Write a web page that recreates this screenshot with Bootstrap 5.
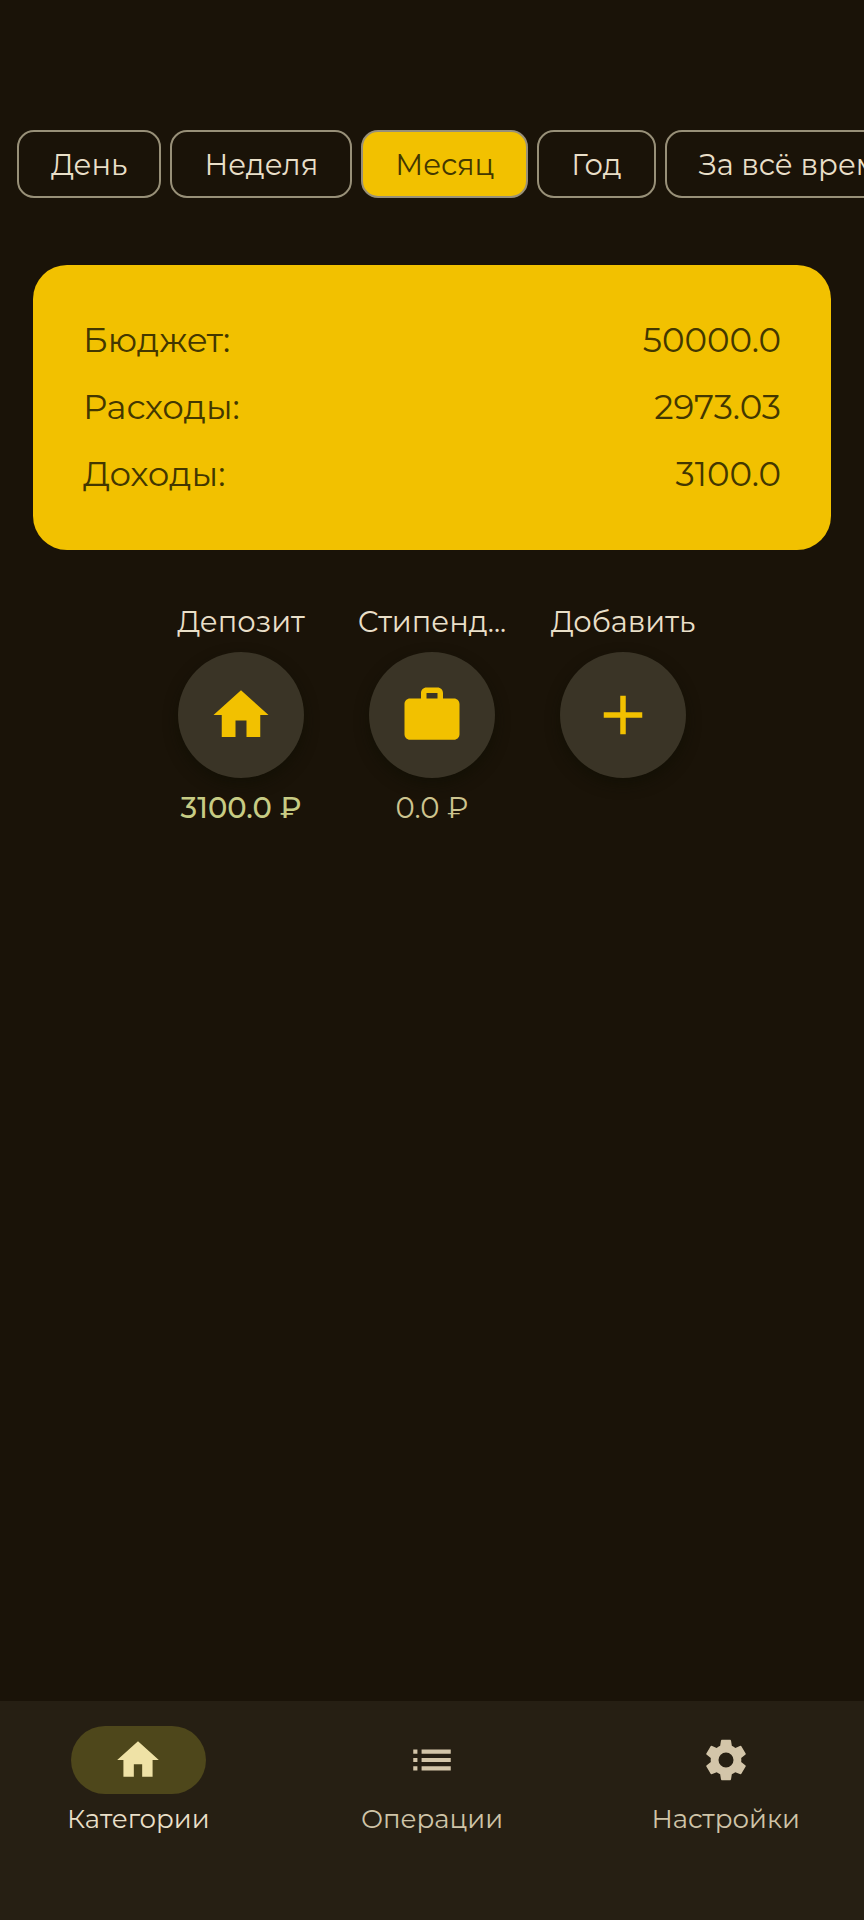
<!DOCTYPE html>
<html lang="ru" data-bs-theme="dark">
<head>
<meta charset="utf-8">
<meta name="viewport" content="width=device-width, initial-scale=1">
<title>Категории</title>
<link href="https://cdn.jsdelivr.net/npm/bootstrap@5.3.0/dist/css/bootstrap.min.css" rel="stylesheet">
<style>
  body { background: #1a1308; color: #e9dfc8; font-family: "Montserrat", "Inter", sans-serif; font-size: 29px; line-height: 42px; }
  .periods { padding: 130px 17px 0; gap: 9px; }
  .chip { height: 68px; padding: 2px 32px 0; border: 2px solid #989078; border-radius: 17px; color: #e9dfc8; font-size: 29px; line-height: 42px; white-space: nowrap; flex: none; }
  .chip.active, .chip:hover { background: #f2c100; border-color: #989078; color: #433700; }
  .summary { margin: 67px 33px 0; padding: 42px 50px; border-radius: 34px; background: #f2c100; color: #433700; font-size: 34px; line-height: 67px; }
  .category-list { margin-top: 51px; gap: 31px; }
  .category { width: 160px; }
  .round-btn { width: 126px; height: 126px; margin: 9px 0; border: 0; background: #3a3426; color: #f2c100; box-shadow: 0 6px 14px #0f0f0399; }
  .round-btn svg { width: 66px; height: 66px; }
  .income { color: #c7cc84; font-weight: 500; }
  .empty-sum { color: #cdc48f; }
  .bottom-bar { background: #261f13; height: 219px; padding-top: 25px; gap: 17px; }
  .tab { flex: 1 1 0; color: #cfc4a8; font-size: 26px; line-height: 34px; }
  .tab.active { color: #e9dfc8; }
  .tab-icon { width: 135px; height: 68px; margin-bottom: 8px; color: #d3c5a9; }
  .tab.active .tab-icon { background: #4e471b; color: #efe2a6; }
  .tab-icon svg { width: 50px; height: 50px; }
</style>
</head>
<body class="d-flex flex-column min-vh-100 overflow-x-hidden">
<header class="periods d-flex overflow-hidden">
  <button type="button" class="btn chip">День</button>
  <button type="button" class="btn chip">Неделя</button>
  <button type="button" class="btn chip active" aria-pressed="true">Месяц</button>
  <button type="button" class="btn chip">Год</button>
  <button type="button" class="btn chip">За всё время</button>
</header>

<main class="flex-grow-1">
  <section class="summary">
    <div class="d-flex justify-content-between"><span>Бюджет:</span><span>50000.0</span></div>
    <div class="d-flex justify-content-between"><span>Расходы:</span><span>2973.03</span></div>
    <div class="d-flex justify-content-between"><span>Доходы:</span><span>3100.0</span></div>
  </section>

  <section class="category-list d-flex justify-content-center">
    <div class="category d-flex flex-column align-items-center text-nowrap">
      <span>Депозит</span>
      <button type="button" class="round-btn rounded-circle d-flex align-items-center justify-content-center" aria-label="Депозит">
        <svg viewBox="0 0 24 24" fill="currentColor"><path d="M10 20v-6h4v6h5v-8h3L12 3 2 12h3v8z"/></svg>
      </button>
      <span class="income">3100.0 ₽</span>
    </div>
    <div class="category d-flex flex-column align-items-center text-nowrap">
      <span>Стипенд...</span>
      <button type="button" class="round-btn rounded-circle d-flex align-items-center justify-content-center" aria-label="Стипендия">
        <svg viewBox="0 0 24 24" fill="currentColor"><path d="M20 6h-4V4c0-1.11-.89-2-2-2h-4c-1.11 0-2 .89-2 2v2H4c-1.11 0-2 .89-2 2v11c0 1.11.89 2 2 2h16c1.11 0 2-.89 2-2V8c0-1.11-.89-2-2-2zm-6 0h-4V4h4v2z"/></svg>
      </button>
      <span class="empty-sum">0.0 ₽</span>
    </div>
    <div class="category d-flex flex-column align-items-center text-nowrap">
      <span>Добавить</span>
      <button type="button" class="round-btn rounded-circle d-flex align-items-center justify-content-center" aria-label="Добавить">
        <svg viewBox="0 0 24 24" fill="currentColor"><path d="M19 13h-6v6h-2v-6H5v-2h6V5h2v6h6z"/></svg>
      </button>
    </div>
  </section>
</main>

<nav class="bottom-bar d-flex align-items-start">
  <a href="#" class="tab active d-flex flex-column align-items-center text-decoration-none" aria-current="page">
    <span class="tab-icon rounded-pill d-flex align-items-center justify-content-center">
      <svg viewBox="0 0 24 24" fill="currentColor"><path d="M10 20v-6h4v6h5v-8h3L12 3 2 12h3v8z"/></svg>
    </span>
    Категории
  </a>
  <a href="#" class="tab d-flex flex-column align-items-center text-decoration-none">
    <span class="tab-icon d-flex align-items-center justify-content-center">
      <svg viewBox="0 0 24 24" fill="currentColor"><path d="M3 13h2v-2H3v2zm0 4h2v-2H3v2zm0-8h2V7H3v2zm4 4h14v-2H7v2zm0 4h14v-2H7v2zM7 7v2h14V7H7z"/></svg>
    </span>
    Операции
  </a>
  <a href="#" class="tab d-flex flex-column align-items-center text-decoration-none">
    <span class="tab-icon d-flex align-items-center justify-content-center">
      <svg viewBox="-12 -12 24 24" fill="currentColor" fill-rule="evenodd"><path d="M-2.1-9.7H2.1L2.4-9.4 2.8-6.8Q3.7-6.4 4.49-5.82L6.9-6.8 7.3-6.7 9.5-3 9.4-2.6 7.29-.97Q7.4 0 7.29.98L9.4 2.6 9.5 3 7.3 6.7 6.9 6.8 4.49 5.82Q3.7 6.4 2.8 6.8L2.4 9.4 2.1 9.7H-2.1L-2.4 9.4-2.8 6.8Q-3.7 6.4-4.49 5.82L-6.9 6.8-7.3 6.7-9.5 3-9.4 2.6-7.29.98Q-7.4 0-7.29-.97L-9.4-2.6-9.5-3-7.3-6.7-6.9-6.8-4.49-5.82Q-3.7-6.4-2.8-6.8L-2.4-9.4zM-3.6 0a3.6 3.6 0 1 0 7.2 0 3.6 3.6 0 1 0-7.2 0z"/></svg>
    </span>
    Настройки
  </a>
</nav>
<script src="https://cdn.jsdelivr.net/npm/bootstrap@5.3.0/dist/js/bootstrap.bundle.min.js"></script>
</body>
</html>
